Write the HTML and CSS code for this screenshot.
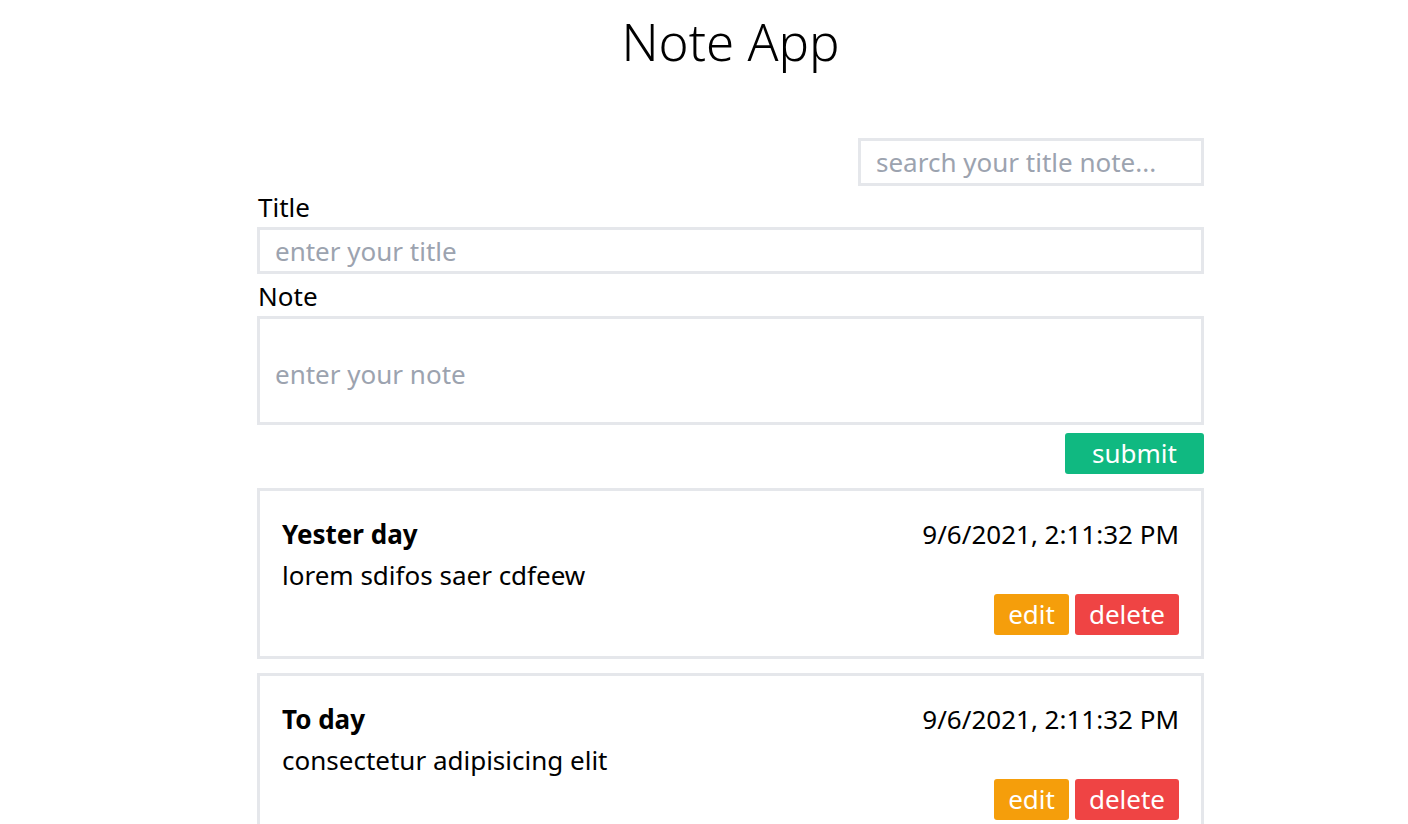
FILE: index.html
```html
<!DOCTYPE html>
<html lang="en">
<head>
<meta charset="utf-8">
<title>Note App</title>
<link rel="stylesheet" href="styles.css">
</head>
<body>
<main class="app">
  <h1 class="app-title">Note App</h1>
  <div class="search-row">
    <input class="search" type="text" placeholder="search your title note...">
  </div>
  <form class="note-form">
    <label class="field-label" for="title">Title</label>
    <input class="field" id="title" type="text" placeholder="enter your title">
    <label class="field-label note-label" for="note">Note</label>
    <textarea class="field area" id="note" placeholder="enter your note"></textarea>
    <div class="submit-row">
      <button class="btn btn-submit" type="button">submit</button>
    </div>
  </form>
  <section class="notes">
    <article class="card">
      <div class="card-head">
        <h2 class="card-title">Yester day</h2>
        <span class="card-date">9/6/2021, 2:11:32 PM</span>
      </div>
      <p class="card-body">lorem sdifos saer cdfeew</p>
      <div class="card-actions">
        <button class="btn btn-edit" type="button">edit</button>
        <button class="btn btn-delete" type="button">delete</button>
      </div>
    </article>
    <article class="card">
      <div class="card-head">
        <h2 class="card-title">To day</h2>
        <span class="card-date">9/6/2021, 2:11:32 PM</span>
      </div>
      <p class="card-body">consectetur adipisicing elit</p>
      <div class="card-actions">
        <button class="btn btn-edit" type="button">edit</button>
        <button class="btn btn-delete" type="button">delete</button>
      </div>
    </article>
  </section>
</main>
</body>
</html>
```
FILE: styles.css
```css
* { box-sizing: border-box; }
html, body { margin: 0; padding: 0; background: #fff; }
body {
  font-family: "Noto Sans", "Open Sans", sans-serif;
  font-size: 26px;
  color: #000;
}
.app {
  width: 947px;
  margin-left: calc(50% - 447px);
}
.app-title {
  margin: 0;
  padding-top: 7px;
  height: 138px;
  text-align: center;
  font-weight: 300;
  font-size: 51px;
  line-height: 68px;
}
.search-row {
  display: flex;
  justify-content: flex-end;
}
.search, .field {
  font-family: inherit;
  font-size: 26px;
  border: 3px solid #e5e7eb;
  outline: none;
  color: #000;
  background: #fff;
  padding: 0 15px;
}
.search::placeholder, .field::placeholder { color: #9ca3af; }
.search {
  width: 346px;
  height: 48px;
}
.note-form {
  display: flex;
  flex-direction: column;
}
.field-label {
  display: block;
  height: 41px;
  line-height: 43px;
  padding-left: 1px;
}
.note-label {
  height: 42px;
  line-height: 44px;
}
.field {
  width: 947px;
  height: 47px;
}
.area {
  height: 109px;
  resize: none;
  display: block;
  padding: 37px 15px 0;
  line-height: 36px;
}
.submit-row {
  display: flex;
  justify-content: flex-end;
  margin-top: 8px;
}
.btn {
  font-family: inherit;
  font-size: 26px;
  color: #fff;
  border: none;
  border-radius: 3px;
  height: 41px;
  padding: 0;
  line-height: 41px;
  text-align: center;
  cursor: pointer;
}
.btn-submit { width: 139px; background: #10b981; }
.btn-edit { width: 75px; background: #f59e0b; }
.btn-delete { width: 104px; background: #ef4444; }
.notes {
  display: flex;
  flex-direction: column;
  gap: 14px;
  margin-top: 14px;
}
.card {
  border: 3px solid #e5e7eb;
  padding: 22px 22px 21px 22px;
}
.card-head {
  display: flex;
  justify-content: space-between;
  align-items: baseline;
  height: 40px;
  line-height: 42px;
}
.card-title {
  margin: 0;
  font-size: 26px;
  font-weight: 700;
}
.card-date { font-size: 26px; }
.card-body {
  margin: 0;
  height: 41px;
  line-height: 44px;
}
.card-actions {
  display: flex;
  justify-content: flex-end;
  gap: 6px;
}
```
